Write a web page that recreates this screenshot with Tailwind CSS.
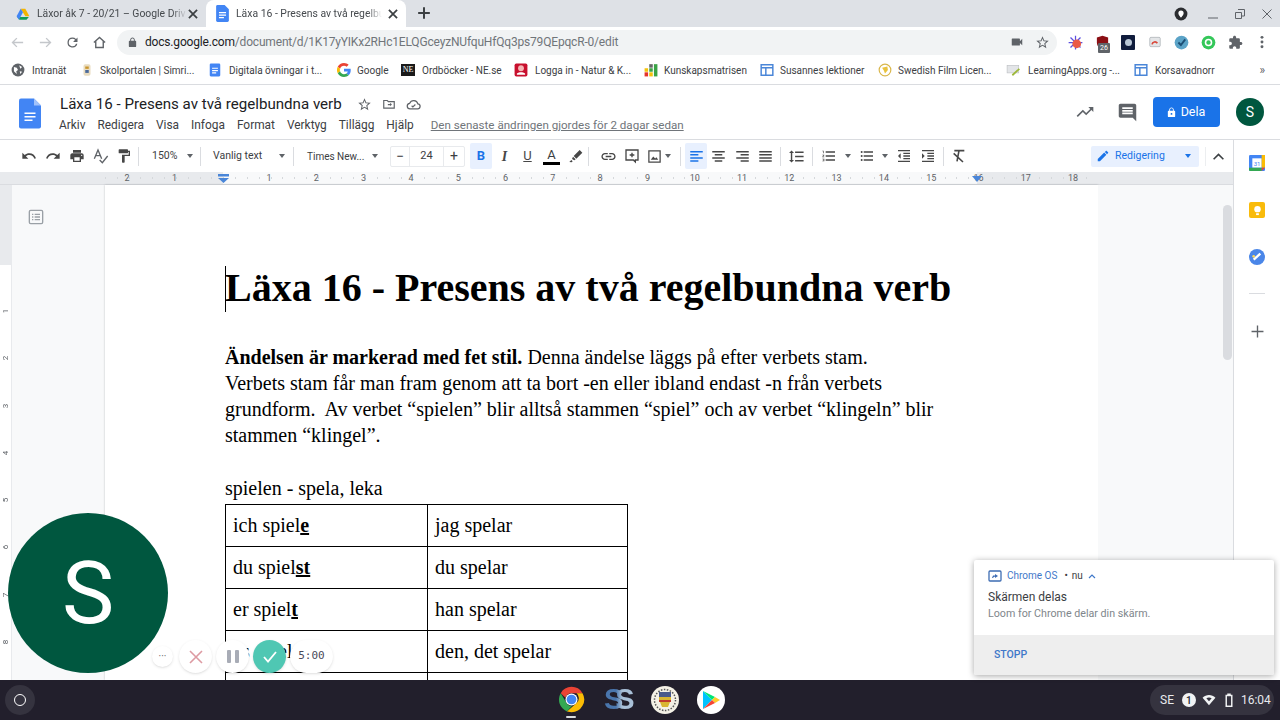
<!DOCTYPE html>
<html lang="en">
<head>
  <meta charset="UTF-8" />
  <title>Läxa 16 - Presens av två regelbundna verb</title>
  <script src="https://cdn.jsdelivr.net/npm/@tailwindcss/browser@4"></script>
</head>
<body class="font-['Roboto',sans-serif] text-[#3c4043]">
<div class="relative w-[1280px] h-[720px] overflow-hidden flex flex-col bg-white">

  <!-- tab strip -->
  <div class="h-[27px] bg-[#dee1e6] flex items-end shrink-0 text-[10.400px]">
    <div class="w-[206px] h-[27px] flex items-center pl-[16px] relative">
      <svg class="w-[14px] h-[14px] shrink-0" viewBox="0 0 24 24"><path fill="#0f9d58" d="M2 17l4 5h12l4-5z"/><path fill="#f4b400" d="M8 3h8l7 13h-7z"/><path fill="#4285f4" d="M8 3L1 16l4 6 7-13z"/></svg>
      <span class="ml-[7px] w-[150px] whitespace-nowrap text-[#45494d] [mask-image:linear-gradient(to_right,black_90%,transparent)]">Läxor åk 7 - 20/21 – Google Driv</span>
      <svg class="w-[14px] h-[14px] ml-[-1px] shrink-0" viewBox="0 0 24 24"><path stroke="#3c4043" stroke-width="3" d="M5 5l14 14M19 5L5 19"/></svg>
    </div>
    <div class="w-[200px] h-[27px] bg-white rounded-t-lg flex items-center pl-[10px]">
      <svg class="w-[13px] h-[17px] shrink-0" viewBox="0 0 18 24"><path fill="#4285f4" d="M2 0h10l6 6v16a2 2 0 0 1-2 2H2a2 2 0 0 1-2-2V2a2 2 0 0 1 2-2z"/><path fill="#fff" d="M4 10h10v1.600H4zm0 3.500h10v1.600H4zm0 3.500h7v1.600H4z"/></svg>
      <span class="ml-[7px] w-[146px] whitespace-nowrap text-[#45494d] [mask-image:linear-gradient(to_right,black_90%,transparent)]">Läxa 16 - Presens av två regelbu</span>
      <svg class="w-[14px] h-[14px] ml-[4px] shrink-0" viewBox="0 0 24 24"><path stroke="#3c4043" stroke-width="3" d="M5 5l14 14M19 5L5 19"/></svg>
    </div>
    <svg class="w-[14px] h-[14px] ml-[11px] mb-[7px]" viewBox="0 0 24 24"><path stroke="#3c4043" stroke-width="3.400" d="M12 2v20M2 12h20"/></svg>
    <div class="ml-auto flex items-center h-[27px] pr-[7px]">
      <svg class="w-[14px] h-[14px]" viewBox="0 0 24 24"><circle cx="12" cy="12" r="11" fill="#2b2d30"/><path fill="#fff" d="M12 6a4.500 4.500 0 0 1 4.500 4.500c0 3-4.500 7.500-4.500 7.500s-4.500-4.500-4.500-7.500A4.500 4.500 0 0 1 12 6z"/></svg>
      <svg class="w-[12px] h-[12px] ml-[19px]" viewBox="0 0 24 24"><path stroke="#5f6368" stroke-width="2" d="M2 20h20"/></svg>
      <svg class="w-[12px] h-[12px] ml-[15px]" viewBox="0 0 24 24" fill="none"><path stroke="#5f6368" stroke-width="2" d="M8 3h13v13h-6M3 9h12v12H3z"/></svg>
      <svg class="w-[12px] h-[12px] ml-[15px]" viewBox="0 0 24 24"><path stroke="#5f6368" stroke-width="2" d="M3 3l18 18M21 3L3 21"/></svg>
    </div>
  </div>

  <!-- address bar -->
  <div class="h-[29px] pt-[1px] flex items-center shrink-0 relative">
    <svg class="w-[15px] h-[15px] ml-[10px]" viewBox="0 0 24 24" fill="none"><path stroke="#c4c7cb" stroke-width="2.200" d="M21 12H4m7-7l-7 7 7 7"/></svg>
    <svg class="w-[15px] h-[15px] ml-[13px]" viewBox="0 0 24 24" fill="none"><path stroke="#c4c7cb" stroke-width="2.200" d="M3 12h17m-7-7l7 7-7 7"/></svg>
    <svg class="w-[15px] h-[15px] ml-[12px]" viewBox="0 0 24 24"><path fill="#5f6368" d="M17.650 6.350A7.960 7.960 0 0 0 12 4a8 8 0 1 0 7.730 10h-2.080A6 6 0 1 1 12 6c1.660 0 3.140.69 4.220 1.780L13 11h7V4l-2.350 2.350z"/></svg>
    <svg class="w-[15px] h-[15px] ml-[12px]" viewBox="0 0 24 24" fill="none"><path stroke="#5f6368" stroke-width="2.200" d="M3 12l9-8 9 8M6 10v10h12V10"/></svg>
    <div class="ml-[10px] w-[940px] h-[25px] rounded-full bg-[#f1f3f4] flex items-center pl-[10px] pr-[7px]">
      <svg class="w-[11px] h-[11px]" viewBox="0 0 24 24"><path fill="#5f6368" d="M18 8h-1V6c0-2.760-2.240-5-5-5S7 3.240 7 6v2H6c-1.100 0-2 .9-2 2v10c0 1.100.9 2 2 2h12c1.100 0 2-.9 2-2V10c0-1.100-.9-2-2-2zM9 6c0-1.660 1.340-3 3-3s3 1.340 3 3v2H9V6z"/></svg>
      <span class="ml-[7px] text-[12px] tracking-[-0.18px] text-[#70757a] whitespace-nowrap"><span class="text-[#202124]">docs.google.com</span>/document/d/1K17yYIKx2RHc1ELQGceyzNUfquHfQq3ps79QEpqcR-0/edit</span>
      <svg class="w-[14px] h-[14px] ml-auto" viewBox="0 0 24 24"><path fill="#5f6368" d="M17 10.500V7c0-.55-.45-1-1-1H4c-.55 0-1 .45-1 1v10c0 .55.45 1 1 1h12c.55 0 1-.45 1-1v-3.500l4 4v-11l-4 4z"/></svg>
      <svg class="w-[15px] h-[15px] ml-[11px]" viewBox="0 0 24 24"><path fill="#5f6368" d="M22 9.240l-7.190-.62L12 2 9.190 8.630 2 9.240l5.460 4.730L5.820 21 12 17.270 18.180 21l-1.630-7.030L22 9.240zM12 15.400l-3.760 2.270 1-4.280-3.320-2.880 4.380-.38L12 6.100l1.710 4.040 4.380.38-3.320 2.880 1 4.280L12 15.400z"/></svg>
    </div>
    <div class="flex items-center ml-[11px]">
      <svg class="w-[15px] h-[15px]" viewBox="0 0 24 24"><g stroke="#5b4fe0" stroke-width="2"><path d="M12 1v22M1 12h22M4 4l16 16M20 4L4 20"/></g><circle cx="14" cy="14" r="7" fill="#ea5a47"/></svg>
      <div class="relative ml-[12px] w-[15px] h-[15px]">
        <svg class="w-[15px] h-[15px]" viewBox="0 0 24 24"><path fill="#8b0f14" d="M12 1l9 3v8c0 6-4 9-9 11-5-2-9-5-9-11V4z"/></svg>
        <span class="absolute left-[3px] top-[8px] bg-[#5f6368] text-white text-[7px] leading-[10px] px-[2px] rounded-[1px]">26</span>
      </div>
      <div class="ml-[11px] w-[14px] h-[15px] bg-[#101c3c] rounded-[1px] flex items-center justify-center"><span class="w-[7px] h-[7px] rounded-full bg-[#b9c7d6]"></span></div>
      <svg class="w-[14px] h-[14px] ml-[13px]" viewBox="0 0 24 24"><rect x="3" y="4" width="18" height="16" rx="2" fill="#e4e6e8" stroke="#9aa0a6"/><path d="M7 16a5 5 0 0 1 9-2" stroke="#d9483b" stroke-width="3" fill="none"/></svg>
      <svg class="w-[15px] h-[15px] ml-[12px]" viewBox="0 0 24 24"><circle cx="12" cy="12" r="11" fill="#5ba3c7"/><path d="M7 12l4 4 7-9" stroke="#1c4f75" stroke-width="3" fill="none"/></svg>
      <svg class="w-[15px] h-[15px] ml-[12px]" viewBox="0 0 24 24"><circle cx="12" cy="12" r="11" fill="#34c759"/><circle cx="12" cy="12" r="6" fill="#fff"/><circle cx="12" cy="12" r="3.500" fill="#34c759"/></svg>
      <svg class="w-[15px] h-[15px] ml-[12px]" viewBox="0 0 24 24"><path fill="#5f6368" d="M20.500 11H19V7c0-1.100-.9-2-2-2h-4V3.500C13 2.120 11.880 1 10.500 1S8 2.120 8 3.500V5H4c-1.100 0-1.990.9-1.990 2v3.800H3.500c1.490 0 2.700 1.210 2.700 2.700s-1.210 2.700-2.700 2.700H2V20c0 1.100.9 2 2 2h3.800v-1.500c0-1.490 1.210-2.700 2.700-2.700 1.490 0 2.700 1.210 2.700 2.700V22H17c1.100 0 2-.9 2-2v-4h1.500c1.380 0 2.500-1.120 2.500-2.500S21.880 11 20.500 11z"/></svg>
      <svg class="w-[14px] h-[14px] ml-[12px]" viewBox="0 0 24 24"><g fill="#5f6368"><circle cx="12" cy="4" r="2.500"/><circle cx="12" cy="12" r="2.500"/><circle cx="12" cy="20" r="2.500"/></g></svg>
    </div>
  </div>

  <!-- bookmarks -->
  <div class="h-[29px] flex items-center pl-[11px] shrink-0 border-b border-[#dadce0] text-[10px] text-[#3c4043] whitespace-nowrap">
    <div class="w-[69px] flex items-center gap-[7px]">
      <svg class="w-[14px] h-[14px]" viewBox="0 0 24 24"><circle cx="12" cy="12" r="11" fill="#5f6368"/><path fill="#fff" d="M5 7l5 1 2 4-3 2 1 5-5-5zM14 4l5 3-3 3zM15 14l4 1-3 4z"/></svg>
      <span>Intranät</span>
    </div>
    <div class="w-[128px] flex items-center gap-[6px]">
      <svg class="w-[14px] h-[14px]" viewBox="0 0 24 24"><rect x="6" y="2" width="12" height="20" rx="3" fill="#e9dcc0"/><rect x="9" y="6" width="6" height="4" fill="#c9952c"/><rect x="9" y="12" width="6" height="5" fill="#4b6a9b"/></svg>
      <span>Skolportalen | Simri...</span>
    </div>
    <div class="w-[129px] flex items-center gap-[7px]">
      <svg class="w-[14px] h-[14px]" viewBox="0 0 24 24"><rect x="3" y="1" width="18" height="22" rx="2" fill="#4285f4"/><path fill="#fff" d="M7 8h10v2H7zm0 4h10v2H7zm0 4h7v2H7z"/></svg>
      <span>Digitala övningar i t...</span>
    </div>
    <div class="w-[64px] flex items-center gap-[6px]">
      <svg class="w-[14px] h-[14px]" viewBox="0 0 48 48"><path fill="#ea4335" d="M24 9.500c3.500 0 6.700 1.300 9.100 3.500l6.800-6.800C35.800 2.400 30.300 0 24 0 14.600 0 6.500 5.400 2.600 13.200l7.900 6.200C12.400 13.700 17.700 9.500 24 9.500z"/><path fill="#4285f4" d="M47 24.500c0-1.600-.1-3.100-.4-4.500H24v9h12.900c-.6 3-2.200 5.500-4.800 7.200l7.700 6C44.400 37.900 47 31.700 47 24.500z"/><path fill="#fbbc05" d="M10.500 28.600a14.500 14.500 0 0 1 0-9.200l-7.900-6.200a24 24 0 0 0 0 21.600z"/><path fill="#34a853" d="M24 48c6.500 0 11.900-2.100 15.900-5.800l-7.700-6c-2.200 1.400-4.900 2.300-8.200 2.300-6.300 0-11.600-4.200-13.500-9.900l-7.900 6.200C6.500 42.600 14.600 48 24 48z"/></svg>
      <span>Google</span>
    </div>
    <div class="w-[113px] flex items-center gap-[7px]">
      <span class="w-[14px] h-[12px] bg-[#1a1a1a] text-white text-[8px] leading-[12px] text-center font-['Liberation_Serif',serif]">NE</span>
      <span>Ordböcker - NE.se</span>
    </div>
    <div class="w-[130px] flex items-center gap-[7px]">
      <svg class="w-[14px] h-[14px]" viewBox="0 0 24 24"><rect x="1" y="1" width="22" height="22" rx="3" fill="#c8102e"/><circle cx="12" cy="9" r="5" fill="#f5b5b5"/><path fill="#fff" d="M5 18c4-3 10-3 14 0v2H5z"/></svg>
      <span>Logga in - Natur &amp; K...</span>
    </div>
    <div class="w-[116px] flex items-center gap-[6px]">
      <svg class="w-[14px] h-[14px]" viewBox="0 0 24 24"><rect x="1" y="16" width="6" height="7" fill="#e5342b"/><rect x="1" y="9" width="6" height="6" fill="#f4c20d"/><rect x="9" y="16" width="6" height="7" fill="#f4c20d"/><rect x="9" y="9" width="6" height="6" fill="#3aa346"/><rect x="9" y="2" width="6" height="6" fill="#666"/><rect x="17" y="2" width="6" height="21" fill="#3aa346"/></svg>
      <span>Kunskapsmatrisen</span>
    </div>
    <div class="w-[118px] flex items-center gap-[6px]">
      <svg class="w-[14px] h-[14px]" viewBox="0 0 24 24" fill="none"><path stroke="#4a86d8" stroke-width="2.500" d="M2 3h20v18H2zM2 8h20M10 8v13"/></svg>
      <span>Susannes lektioner</span>
    </div>
    <div class="w-[128px] flex items-center gap-[6px]">
      <svg class="w-[14px] h-[14px]" viewBox="0 0 24 24"><circle cx="12" cy="12" r="10" fill="#fff" stroke="#d9b64a" stroke-width="2"/><path fill="#e9c33e" d="M7 8l9-2 1 6-5 6-2-5z"/></svg>
      <span>Swedish Film Licen...</span>
    </div>
    <div class="w-[128px] flex items-center gap-[7px]">
      <svg class="w-[15px] h-[14px]" viewBox="0 0 24 24"><rect x="1" y="4" width="20" height="13" fill="#e3e5e8" stroke="#b9bcc0"/><path stroke="#9db83a" stroke-width="3" d="M10 21l12-11"/></svg>
      <span>LearningApps.org -...</span>
    </div>
    <div class="flex items-center gap-[7px]">
      <svg class="w-[14px] h-[14px]" viewBox="0 0 24 24" fill="none"><path stroke="#4a86d8" stroke-width="2.500" d="M2 3h20v18H2zM2 8h20M10 8v13"/></svg>
      <span>Korsavadnorr</span>
    </div>
    <span class="ml-auto mr-[15px] text-[#5f6368] text-[12px]">»</span>
  </div>

  <!-- docs header -->
  <div class="h-[55px] flex shrink-0 border-b border-[#dadce0]">
    <svg class="w-[22px] h-[31px] ml-[19px] mt-[13px]" viewBox="0 0 22 30"><path fill="#4285f4" d="M2 0h13l7 7v21a2 2 0 0 1-2 2H2a2 2 0 0 1-2-2V2a2 2 0 0 1 2-2z"/><path fill="#a1c2fa" d="M15 0l7 7h-7z"/><path fill="#fff" d="M5.500 14h11v1.600h-11zm0 3.500h11v1.600h-11zm0 3.500h8v1.600h-8z"/></svg>
    <div class="ml-[18px]">
      <div class="flex items-center h-[26px] mt-[6px] pl-[1px]">
        <span class="text-[15.100px] text-[#202124]">Läxa 16 - Presens av två regelbundna verb</span>
        <svg class="w-[15px] h-[15px] ml-[15px]" viewBox="0 0 24 24"><path fill="#5f6368" d="M22 9.240l-7.190-.62L12 2 9.190 8.630 2 9.240l5.460 4.730L5.820 21 12 17.270 18.180 21l-1.630-7.030L22 9.240zM12 15.400l-3.760 2.270 1-4.280-3.320-2.880 4.380-.38L12 6.100l1.710 4.040 4.380.38-3.320 2.880 1 4.280L12 15.400z"/></svg>
        <svg class="w-[14px] h-[14px] ml-[10px]" viewBox="0 0 24 24" fill="none"><path stroke="#5f6368" stroke-width="2" d="M3 6h6l2 2h10v11H3z"/><path fill="#5f6368" d="M10 12h4V10l3 3-3 3v-2h-4z"/></svg>
        <svg class="w-[15px] h-[15px] ml-[10px]" viewBox="0 0 24 24" fill="none"><path stroke="#5f6368" stroke-width="2" d="M6.500 19a4.500 4.500 0 0 1-.6-8.960 7 7 0 0 1 13.100 1A4 4 0 0 1 18 19z"/><path stroke="#5f6368" stroke-width="1.800" d="M9 14l2 2 4-4"/></svg>
      </div>
      <div class="flex items-center text-[11.900px] text-[#3c4043] h-[15px] mt-[1px] whitespace-nowrap">
        <span>Arkiv</span><span class="ml-[12px]">Redigera</span><span class="ml-[12px]">Visa</span><span class="ml-[12px]">Infoga</span><span class="ml-[12px]">Format</span><span class="ml-[12px]">Verktyg</span><span class="ml-[12px]">Tillägg</span><span class="ml-[12px]">Hjälp</span>
        <span class="ml-[17px] text-[11.600px] text-[#70757a] underline">Den senaste ändringen gjordes för 2 dagar sedan</span>
      </div>
    </div>
    <div class="ml-auto flex items-center pr-[16px]">
      <svg class="w-[20px] h-[20px]" viewBox="0 0 24 24"><path fill="#5f6368" d="M16 6l2.290 2.290-4.880 4.880-4-4L2 16.590 3.410 18l6-6 4 4 6.300-6.290L22 12V6z"/></svg>
      <svg class="w-[21px] h-[21px] ml-[22px]" viewBox="0 0 24 24"><path fill="#5f6368" d="M21.990 4c0-1.100-.89-2-1.990-2H4c-1.100 0-2 .9-2 2v12c0 1.100.9 2 2 2h14l4 4-.01-18zM18 14H6v-2h12v2zm0-3H6V9h12v2zm0-3H6V6h12v2z"/></svg>
      <div class="ml-[15px] w-[67px] h-[30px] rounded bg-[#1a73e8] text-white text-[12.500px] flex items-center justify-center gap-[4px] pr-[2px]">
        <svg class="w-[11px] h-[11px]" viewBox="0 0 24 24"><path fill="#fff" d="M18 8h-1V6c0-2.760-2.240-5-5-5S7 3.240 7 6v2H6c-1.100 0-2 .9-2 2v10c0 1.100.9 2 2 2h12c1.100 0 2-.9 2-2V10c0-1.100-.9-2-2-2zm-6 9c-1.100 0-2-.9-2-2s.9-2 2-2 2 .9 2 2-.9 2-2 2zm3.100-9H8.900V6c0-1.710 1.390-3.100 3.100-3.100 1.710 0 3.100 1.390 3.100 3.100v2z"/></svg>
        <span>Dela</span>
      </div>
      <div class="ml-[16px] w-[28px] h-[28px] rounded-full bg-[#00573f] text-white text-[14px] flex items-center justify-center">S</div>
    </div>
  </div>

  <!-- toolbar -->
  <div class="h-[32px] flex items-center shrink-0 pl-[17px] text-[10.500px] text-[#3c4043] whitespace-nowrap">
    <span class="w-[24px] flex justify-center"><svg class="w-[16px] h-[16px]" viewBox="0 0 24 24"><path fill="#474747" d="M12.500 8c-2.650 0-5.050.99-6.900 2.600L2 7v9h9l-3.620-3.620c1.390-1.160 3.160-1.880 5.120-1.880 3.540 0 6.550 2.310 7.600 5.500l2.370-.78C21.080 11.030 17.150 8 12.500 8z"/></svg></span>
    <span class="w-[24px] flex justify-center"><svg class="w-[16px] h-[16px]" viewBox="0 0 24 24"><path fill="#474747" d="M18.400 10.600C16.550 8.990 14.150 8 11.500 8c-4.650 0-8.580 3.030-9.960 7.220L3.900 16c1.050-3.190 4.050-5.500 7.600-5.500 1.950 0 3.730.72 5.120 1.880L13 16h9V7l-3.600 3.600z"/></svg></span>
    <span class="w-[24px] flex justify-center"><svg class="w-[16px] h-[16px]" viewBox="0 0 24 24"><path fill="#474747" d="M19 8H5c-1.660 0-3 1.340-3 3v6h4v4h12v-4h4v-6c0-1.660-1.340-3-3-3zm-3 11H8v-5h8v5zm3-7c-.55 0-1-.45-1-1s.45-1 1-1 1 .45 1 1-.45 1-1 1zm-1-9H6v4h12V3z"/></svg></span>
    <span class="w-[23px] flex justify-center"><svg class="w-[16px] h-[16px]" viewBox="0 0 24 24" fill="none"><path stroke="#5f6368" stroke-width="2" d="M2 16L7.500 3 13 16M4 11.500h7M10 18l4 4 8-10"/></svg></span>
    <span class="w-[24px] flex justify-center"><svg class="w-[16px] h-[16px]" viewBox="0 0 24 24"><path fill="#474747" d="M18 4V3c0-.55-.45-1-1-1H5c-.55 0-1 .45-1 1v4c0 .55.45 1 1 1h12c.55 0 1-.45 1-1V6h1v4H9v11c0 .55.45 1 1 1h2c.55 0 1-.45 1-1v-9h8V4h-3z"/></svg></span>
    <span class="ml-[2px] w-px h-[19px] bg-[#dadce0]"></span>
    <span class="ml-[13px] w-[24px]">150%</span>
    <span class="ml-[11px] w-0 h-0 border-x-[3.500px] border-x-transparent border-t-[4px] border-t-[#5f6368]"></span>
    <span class="ml-[7px] w-px h-[19px] bg-[#dadce0]"></span>
    <span class="ml-[12px] w-[48px]">Vanlig text</span>
    <span class="ml-[18px] w-0 h-0 border-x-[3.500px] border-x-transparent border-t-[4px] border-t-[#5f6368]"></span>
    <span class="ml-[8px] w-px h-[19px] bg-[#dadce0]"></span>
    <span class="ml-[13px] w-[56px] text-[10px]">Times New...</span>
    <span class="ml-[9px] w-0 h-0 border-x-[3.500px] border-x-transparent border-t-[4px] border-t-[#5f6368]"></span>
    <div class="ml-[12px] w-[75px] h-[21px] border border-[#e8eaed] rounded-[2px] flex items-center">
      <span class="w-[19px] text-center text-[14px] leading-[19px] border-r border-[#e8eaed]">−</span>
      <span class="flex-1 text-center text-[11px]">24</span>
      <span class="w-[21px] text-center text-[14px] leading-[19px] border-l border-[#e8eaed]">+</span>
    </div>
    <span class="ml-[5px] w-[22px] h-[26px] rounded-[2px] bg-[#e8f0fe] text-[#1a73e8] font-bold text-[13px] flex items-center justify-center">B</span>
    <span class="ml-[1px] w-[23px] text-center italic text-[14px] font-['Liberation_Serif',serif] font-bold text-[#474747]">I</span>
    <span class="w-[23px] text-center text-[13px] underline text-[#474747]">U</span>
    <span class="w-[25px] flex flex-col items-center"><span class="text-[13px] leading-[14px]">A</span><span class="w-[17px] h-[3px] bg-black"></span></span>
    <span class="w-[24px] flex justify-center"><svg class="w-[16px] h-[16px]" viewBox="0 0 24 24"><path fill="#474747" d="M17.500 3l4 4-9 9-4-4zM7.500 13l4 4-2 1.500-3.500-2zM5 18l2 2-1.500 1.500-3.500-.5z"/></svg></span>
    <span class="ml-[0px] w-px h-[19px] bg-[#dadce0]"></span>
    <span class="ml-[7px] w-[24px] flex justify-center"><svg class="w-[17px] h-[17px]" viewBox="0 0 24 24"><path fill="#474747" d="M3.900 12c0-1.710 1.390-3.100 3.100-3.100h4V7H7c-2.760 0-5 2.240-5 5s2.240 5 5 5h4v-1.900H7c-1.710 0-3.100-1.390-3.100-3.100zM8 13h8v-2H8v2zm9-6h-4v1.900h4c1.710 0 3.100 1.390 3.100 3.100s-1.390 3.100-3.100 3.100h-4V17h4c2.760 0 5-2.240 5-5s-2.240-5-5-5z"/></svg></span>
    <span class="w-[24px] flex justify-center"><svg class="w-[16px] h-[16px]" viewBox="0 0 24 24" fill="none"><path stroke="#474747" stroke-width="2" d="M3 3h18v15h-4v3l-3-3H3zM12 7v7M8.500 10.500h7"/></svg></span>
    <span class="w-[21px] flex justify-center"><svg class="w-[15px] h-[15px]" viewBox="0 0 24 24" fill="none"><path stroke="#474747" stroke-width="2" d="M3 3h18v18H3z"/><path fill="#474747" d="M6 17l4-5 3 3 2-2 3 4z"/></svg></span>
    <span class="w-0 h-0 border-x-[3.500px] border-x-transparent border-t-[4px] border-t-[#5f6368]"></span>
    <span class="ml-[9px] w-px h-[19px] bg-[#dadce0]"></span>
    <span class="ml-[4px] w-[22px] h-[26px] rounded-[2px] bg-[#e8f0fe] flex items-center justify-center"><svg class="w-[15px] h-[15px]" viewBox="0 0 24 24"><path fill="#1a73e8" d="M2 3h20v2.500H2zm0 5h13v2.500H2zm0 5h20v2.500H2zm0 5h13v2.500H2z"/></svg></span>
    <span class="w-[23px] flex justify-center"><svg class="w-[15px] h-[15px]" viewBox="0 0 24 24"><path fill="#474747" d="M2 3h20v2.500H2zm4 5h12v2.500H6zm-4 5h20v2.500H2zm4 5h12v2.500H6z"/></svg></span>
    <span class="w-[24px] flex justify-center"><svg class="w-[15px] h-[15px]" viewBox="0 0 24 24"><path fill="#474747" d="M2 3h20v2.500H2zm7 5h13v2.500H9zm-7 5h20v2.500H2zm7 5h13v2.500H9z"/></svg></span>
    <span class="w-[23px] flex justify-center"><svg class="w-[15px] h-[15px]" viewBox="0 0 24 24"><path fill="#474747" d="M2 3h20v2.500H2zm0 5h20v2.500H2zm0 5h20v2.500H2zm0 5h20v2.500H2z"/></svg></span>
    <span class="ml-[3px] w-px h-[19px] bg-[#dadce0]"></span>
    <span class="ml-[5px] w-[21px] flex justify-center"><svg class="w-[17px] h-[17px]" viewBox="0 0 24 24"><path fill="#474747" d="M6 7h2.500L5 3.500 1.500 7H4v10H1.500L5 20.500 8.500 17H6V7zm4-2v2h12V5H10zm0 14h12v-2H10v2zm0-6h12v-2H10v2z"/></svg></span>
    <span class="ml-[5px] w-px h-[19px] bg-[#dadce0]"></span>
    <span class="ml-[6px] w-[20px] flex justify-center"><svg class="w-[16px] h-[16px]" viewBox="0 0 24 24"><path fill="#474747" d="M2 17h2v.5H3v1h1v.5H2v1h3v-4H2v1zm1-9h1V4H2v1h1v3zm-1 3h1.800L2 13.100v.9h3v-1H3.200L5 10.900V10H2v1zm5-6v2h14V5H7zm0 14h14v-2H7v2zm0-6h14v-2H7v2z"/></svg></span>
    <span class="ml-[6px] w-0 h-0 border-x-[3.500px] border-x-transparent border-t-[4px] border-t-[#5f6368]"></span>
    <span class="ml-[6px] w-[20px] flex justify-center"><svg class="w-[16px] h-[16px]" viewBox="0 0 24 24"><path fill="#474747" d="M4 10.500a1.500 1.500 0 1 0 0 3 1.500 1.500 0 0 0 0-3zm0-6a1.500 1.500 0 1 0 0 3 1.500 1.500 0 0 0 0-3zm0 12a1.500 1.500 0 1 0 0 3 1.500 1.500 0 0 0 0-3zM7 19h14v-2H7v2zm0-6h14v-2H7v2zm0-8v2h14V5H7z"/></svg></span>
    <span class="ml-[5px] w-0 h-0 border-x-[3.500px] border-x-transparent border-t-[4px] border-t-[#5f6368]"></span>
    <span class="ml-[4px] w-[24px] flex justify-center"><svg class="w-[16px] h-[16px]" viewBox="0 0 24 24"><path fill="#474747" d="M11 17h10v-2H11v2zm-8-5l4 4V8l-4 4zm0 9h18v-2H3v2zM3 3v2h18V3H3zm8 6h10V7H11v2zm0 4h10v-2H11v2z"/></svg></span>
    <span class="w-[23px] flex justify-center"><svg class="w-[16px] h-[16px]" viewBox="0 0 24 24"><path fill="#474747" d="M3 21h18v-2H3v2zM3 8v8l4-4-4-4zm8 9h10v-2H11v2zM3 3v2h18V3H3zm8 6h10V7H11v2zm0 4h10v-2H11v2z"/></svg></span>
    <span class="ml-[4px] w-px h-[19px] bg-[#dadce0]"></span>
    <span class="ml-[6px] w-[18px] flex justify-center"><svg class="w-[16px] h-[16px]" viewBox="0 0 24 24" fill="none"><path stroke="#474747" stroke-width="2.400" d="M5 4h15M12 4L9 20M4 8l14 13"/></svg></span>
    <div class="ml-auto w-[108px] h-[21px] rounded-[2px] bg-[#e8f0fe] text-[#1a73e8] flex items-center pl-[5px]">
      <svg class="w-[14px] h-[14px]" viewBox="0 0 24 24"><path fill="#1a73e8" d="M3 17.250V21h3.750L17.810 9.940l-3.750-3.750L3 17.250zM20.710 7.040c.39-.39.39-1.020 0-1.410l-2.340-2.340c-.39-.39-1.020-.39-1.410 0l-1.830 1.830 3.750 3.750 1.830-1.830z"/></svg>
      <span class="ml-[5px]">Redigering</span>
      <span class="ml-auto mr-[8px] w-0 h-0 border-x-[3.500px] border-x-transparent border-t-[4px] border-t-[#1a73e8]"></span>
    </div>
    <span class="ml-[6px] w-px h-[19px] bg-[#eceef0]"></span>
    <svg class="w-[13px] h-[13px] ml-[6px] mr-[55px]" viewBox="0 0 24 24" fill="none"><path stroke="#3c4043" stroke-width="3" d="M3 17l9-9 9 9"/></svg>
  </div>

  <!-- ruler -->
  <div class="h-[13px] bg-[#e8eaed] shrink-0 mr-[47px] relative border-b border-[#dadce0] overflow-hidden">
    <div class="absolute left-[223px] w-[754px] top-0 h-[13px] bg-[#f8f9fa]"></div>
    <div class="absolute left-[105px] right-[135px] top-[5px] h-[2px] bg-[repeating-linear-gradient(90deg,#d5d8db_0,#d5d8db_1px,transparent_1px,transparent_11.825px)]"></div>
    <div class="absolute left-[103.500px] top-0 flex text-[9px] leading-[12px] text-[#5f6368]">
      <span class="w-[47.300px] text-center">2</span><span class="w-[47.300px] text-center">1</span><span class="w-[47.300px]"></span><span class="w-[47.300px] text-center">1</span><span class="w-[47.300px] text-center">2</span><span class="w-[47.300px] text-center">3</span><span class="w-[47.300px] text-center">4</span><span class="w-[47.300px] text-center">5</span><span class="w-[47.300px] text-center">6</span><span class="w-[47.300px] text-center">7</span><span class="w-[47.300px] text-center">8</span><span class="w-[47.300px] text-center">9</span><span class="w-[47.300px] text-center">10</span><span class="w-[47.300px] text-center">11</span><span class="w-[47.300px] text-center">12</span><span class="w-[47.300px] text-center">13</span><span class="w-[47.300px] text-center">14</span><span class="w-[47.300px] text-center">15</span><span class="w-[47.300px] text-center">16</span><span class="w-[47.300px] text-center">17</span><span class="w-[47.300px] text-center">18</span>
    </div>
    <svg class="absolute left-[218px] top-[2px] w-[11px] h-[9px]" viewBox="0 0 11 9"><path fill="#4a86d8" d="M0 0h11v2.500H0zM0 4h11L5.500 9z"/></svg>
    <svg class="absolute left-[972px] top-[4px] w-[10px] h-[6px]" viewBox="0 0 10 6"><path fill="#4a86d8" d="M0 0h10L5 6z"/></svg>
  </div>

  <!-- document area -->
  <div class="flex-1 min-h-0 flex relative">
    <div class="w-[12px] shrink-0 bg-white border-r border-[#e8eaed] overflow-hidden text-[8px] leading-[10px] text-[#5f6368]">
      <div class="h-[80px] bg-[#e8eaed]"></div>
      <div class="flex flex-col items-center pt-[22px]">
        <span class="h-[47.300px] flex items-center justify-center [writing-mode:vertical-rl] rotate-180">1</span>
        <span class="h-[47.300px] flex items-center justify-center [writing-mode:vertical-rl] rotate-180">2</span>
        <span class="h-[47.300px] flex items-center justify-center [writing-mode:vertical-rl] rotate-180">3</span>
        <span class="h-[47.300px] flex items-center justify-center [writing-mode:vertical-rl] rotate-180">4</span>
        <span class="h-[47.300px] flex items-center justify-center [writing-mode:vertical-rl] rotate-180">5</span>
        <span class="h-[47.300px] flex items-center justify-center [writing-mode:vertical-rl] rotate-180">6</span>
        <span class="h-[47.300px] flex items-center justify-center [writing-mode:vertical-rl] rotate-180">7</span>
        <span class="h-[47.300px] flex items-center justify-center [writing-mode:vertical-rl] rotate-180">8</span>
      </div>
    </div>
    <div class="w-[93px] shrink-0 bg-[#f8f9fa] pt-[24px] pl-[16px]">
      <svg class="w-[16px] h-[16px]" viewBox="0 0 24 24" fill="none"><rect x="2" y="2" width="20" height="20" rx="2" stroke="#9aa0a6" stroke-width="2"/><path stroke="#9aa0a6" stroke-width="2" d="M6 8h2M10 8h8M6 12h2M10 12h8M6 16h2M10 16h8"/></svg>
    </div>

    <!-- page -->
    <div class="w-[993px] shrink-0 bg-white shadow-[0_0_2px_rgba(60,64,67,0.3)] pl-[120px] pt-[78px] font-['Liberation_Serif',serif] text-black overflow-hidden relative">
      <h1 class="text-[40px] leading-[50px] font-bold whitespace-nowrap">Läxa 16 - Presens av två regelbundna verb</h1>
      <span class="absolute left-[120px] top-[81px] w-px h-[46px] bg-black"></span>
      <p class="mt-[31px] text-[20px] leading-[26px] w-[740px]"><b>Ändelsen är markerad med fet stil.</b> Denna ändelse läggs på efter verbets stam.<br />Verbets stam får man fram genom att ta bort -en eller ibland endast -n från verbets<br />grundform.&nbsp; Av verbet “spielen” blir alltså stammen “spiel” och av verbet “klingeln” blir<br />stammen “klingel”.</p>
      <p class="mt-[27px] text-[20px] leading-[26px]">spielen - spela, leka</p>
      <table class="mt-[3px] w-[403px] border-collapse text-[20px] table-fixed">
        <tbody>
          <tr class="h-[42px]"><td class="border border-black pl-[7px] pb-[1px] w-[202px]">ich spiel<b class="underline">e</b></td><td class="border border-black pl-[7px] pb-[1px]">jag spelar</td></tr>
          <tr class="h-[42px]"><td class="border border-black pl-[7px] pb-[1px]">du spiel<b class="underline">st</b></td><td class="border border-black pl-[7px] pb-[1px]">du spelar</td></tr>
          <tr class="h-[42px]"><td class="border border-black pl-[7px] pb-[1px]">er spiel<b class="underline">t</b></td><td class="border border-black pl-[7px] pb-[1px]">han spelar</td></tr>
          <tr class="h-[42px]"><td class="border border-black pl-[7px] pb-[1px]">es spiel<b class="underline">t</b></td><td class="border border-black pl-[7px] pb-[1px]">den, det spelar</td></tr>
          <tr class="h-[42px]"><td class="border border-black pl-[7px]">&nbsp;</td><td class="border border-black pl-[7px]">&nbsp;</td></tr>
        </tbody>
      </table>
    </div>

    <div class="flex-1 bg-[#f8f9fa] relative">
      <div class="absolute right-[1px] top-[20px] w-[9px] h-[155px] rounded-full bg-[#dadce0]"></div>
    </div>

    <!-- side panel -->
    <div class="w-[47px] shrink-0 bg-white border-l border-[#dadce0] flex flex-col items-center -mt-[45px] pt-[15px] z-10">
      <svg class="w-[16px] h-[16px]" viewBox="0 0 24 24"><rect width="24" height="24" rx="2" fill="#4285f4"/><rect x="5" y="5" width="14" height="14" fill="#fff"/><path fill="#fbbc04" d="M19 0h5v19h-5z"/><path fill="#34a853" d="M0 19h19v5H2a2 2 0 0 1-2-2z"/><path fill="#ea4335" d="M19 19h5l-5 5z"/><text x="12" y="16" font-size="9" text-anchor="middle" fill="#4285f4" font-family="Roboto">31</text></svg>
      <span class="w-[16px] h-[16px] mt-[31px] rounded-[2px] bg-[#f9bb0b] flex items-center justify-center"><svg class="w-[11px] h-[11px]" viewBox="0 0 24 24"><circle cx="12" cy="9" r="7" fill="#fff"/><rect x="9" y="18" width="6" height="4" fill="#fff"/></svg></span>
      <svg class="w-[16px] h-[16px] mt-[31px]" viewBox="0 0 24 24"><circle cx="12" cy="12" r="12" fill="#4a86e8"/><path d="M7 16l10-9" stroke="#fff" stroke-width="3.500"/><circle cx="7" cy="11" r="2" fill="#fbd75b"/></svg>
      <span class="w-[16px] h-px mt-[28px] bg-[#dadce0]"></span>
      <svg class="w-[13px] h-[13px] mt-[31px]" viewBox="0 0 24 24"><path stroke="#5f6368" stroke-width="2.500" d="M12 1v22M1 12h22"/></svg>
    </div>
  </div>

  <!-- chrome os shelf -->
  <div class="h-[40px] shrink-0 bg-[#221f2c] flex items-center relative text-[#e8eaed]">
    <div class="ml-[5px] w-[30px] h-[30px] rounded-full bg-[#35333f] flex items-center justify-center"><span class="w-[12px] h-[12px] rounded-full border-[1.500px] border-white"></span></div>
    <div class="absolute left-[557px] top-[5px] flex items-center">
      <svg class="w-[29px] h-[29px]" viewBox="0 0 48 48"><path fill="#ea4335" d="M24 3a21 21 0 0 1 18.200 10.500H24a10.500 10.500 0 0 0-10 7.500L6.200 13.500A21 21 0 0 1 24 3z"/><path fill="#34a853" d="M6.200 13.500L15 28.500a10.500 10.500 0 0 0 10 6L16.500 43.700A21 21 0 0 1 6.200 13.500z"/><path fill="#fbbc05" d="M42.200 13.500A21 21 0 0 1 24 45l-7.500-1.300 15.900-14a10.500 10.500 0 0 0 0-16.200z"/><circle cx="24" cy="24" r="10" fill="#fff"/><circle cx="24" cy="24" r="8" fill="#4285f4"/></svg>
      <div class="ml-[18px] w-[30px] font-['Liberation_Sans',sans-serif] font-bold text-[29px] leading-[29px] tracking-[-8px] text-transparent bg-clip-text bg-[linear-gradient(90deg,#4a76ad_40%,#a9c0d8_60%)]">SS</div>
      <svg class="w-[28px] h-[28px] ml-[17px]" viewBox="0 0 28 28"><circle cx="14" cy="14" r="14" fill="#f4f1e6"/><circle cx="14" cy="14" r="10.500" fill="none" stroke="#555" stroke-width="1.500" stroke-dasharray="1.500 1.500"/><path fill="#4a5a8a" d="M8 6h12v5H8z"/><path fill="#d9b531" d="M8 11h12v3H8z"/><path fill="#c0392b" d="M8 14h12v2H8z"/><path fill="#d9b531" d="M9 16h10l-2 5h-6z"/></svg>
      <div class="ml-[18px] w-[28px] h-[28px] rounded-full bg-white flex items-center justify-center">
        <svg class="w-[18px] h-[20px]" viewBox="0 0 18 20"><path fill="#00c3ff" d="M1 1v18l9-9z"/><path fill="#00e676" d="M1 1l9 9 3-3z"/><path fill="#ffca28" d="M13 7l-3 3 3 3 5-3z"/><path fill="#f44336" d="M1 19l9-9 3 3z"/></svg>
      </div>
    </div>
    <span class="absolute left-[566px] bottom-[2px] w-[10px] h-[2px] bg-[#dadce0] rounded"></span>
    <div class="ml-auto mr-[6px] w-[124px] h-[30px] rounded-full bg-[#35333f] flex items-center pl-[10px] text-[12px]">
      <span>SE</span>
      <span class="ml-[8px] w-[14px] h-[14px] rounded-full bg-[#f1f3f4] text-[#221f2c] text-[10px] font-medium flex items-center justify-center">1</span>
      <svg class="w-[14px] h-[14px] ml-[6px]" viewBox="0 0 24 24"><path fill="#f1f3f4" d="M12 21L1 8c6-6 16-6 22 0z"/><path fill="#35333f" d="M12 14L7.500 9c2.500-2 6.500-2 9 0z"/></svg>
      <svg class="w-[12px] h-[14px] ml-[7px]" viewBox="0 0 16 24"><path fill="#f1f3f4" d="M5 1h6v2h3v21H2V3h3z"/><path fill="#35333f" d="M4.500 5.500h7v16h-7z"/></svg>
      <span class="ml-[6px]">16:04</span>
    </div>
  </div>

  <!-- loom recorder overlay -->
  <div class="absolute left-[8px] top-[513px] z-20 w-[160px] h-[160px] rounded-full bg-[#00573f] text-white flex items-center justify-center text-[88px] font-normal leading-none">S</div>
  <div class="absolute left-[152px] top-[640px] z-20 flex items-center">
    <span class="w-[21px] h-[21px] rounded-full bg-white shadow flex items-center justify-center text-[#5f6368] text-[10px] leading-none">···</span>
    <span class="ml-[6px] w-[33px] h-[33px] rounded-full bg-white shadow flex items-center justify-center"><svg class="w-[14px] h-[14px]" viewBox="0 0 14 14"><path stroke="#dd9aa2" stroke-width="1.600" d="M1 1l12 12M13 1L1 13"/></svg></span>
    <span class="ml-[4px] w-[33px] h-[33px] rounded-full bg-white shadow flex items-center justify-center gap-[4px]"><span class="w-[4px] h-[13px] bg-[#a8acb6] rounded-[1px]"></span><span class="w-[4px] h-[13px] bg-[#a8acb6] rounded-[1px]"></span></span>
    <span class="ml-[4px] w-[33px] h-[33px] rounded-full bg-[#4fc7b3] shadow flex items-center justify-center"><svg class="w-[14px] h-[12px]" viewBox="0 0 14 12" fill="none"><path stroke="#fff" stroke-width="1.800" d="M1 6l4 4.500L13 1"/></svg></span>
    <span class="ml-[4px] w-[43px] h-[33px] rounded-full bg-white shadow flex items-center justify-center font-['DejaVu_Sans_Mono',monospace] text-[11px] text-[#4a4a5a]">5:00</span>
  </div>

  <!-- notification -->
  <div class="absolute left-[974px] top-[560px] z-20 w-[300px] h-[115px] bg-white rounded-[2px] shadow-[0_1px_6px_rgba(0,0,0,0.35)] overflow-hidden flex flex-col">
    <div class="h-[75px] px-[14px] pt-[8px]">
      <div class="flex items-center text-[10px]">
        <svg class="w-[14px] h-[12px]" viewBox="0 0 14 12" fill="none"><rect x="1" y="1" width="12" height="10" rx="1" stroke="#3d6cb3" stroke-width="1.300"/><path fill="#3d6cb3" d="M4 8l1-2.500h2V4l3 2-3 2V6.800H6L5 8z"/></svg>
        <span class="ml-[5px] text-[#3f78c9]">Chrome OS</span>
        <span class="ml-[7px] text-[#3c4043]">•</span>
        <span class="ml-[4px] text-[#3c4043]">nu</span>
        <svg class="w-[8px] h-[6px] ml-[5px]" viewBox="0 0 8 6" fill="none"><path stroke="#3f78c9" stroke-width="1.200" d="M1 5l3-3 3 3"/></svg>
      </div>
      <div class="mt-[7px] text-[12px] leading-[15px] text-[#3c4043]">Skärmen delas</div>
      <div class="mt-[1px] text-[10.700px] leading-[15px] text-[#80868b]">Loom for Chrome delar din skärm.</div>
    </div>
    <div class="flex-1 bg-[#eeeeee] pl-[20px] flex items-center text-[10.500px] font-medium text-[#3f78c9]">STOPP</div>
  </div>

</div>
</body>
</html>
